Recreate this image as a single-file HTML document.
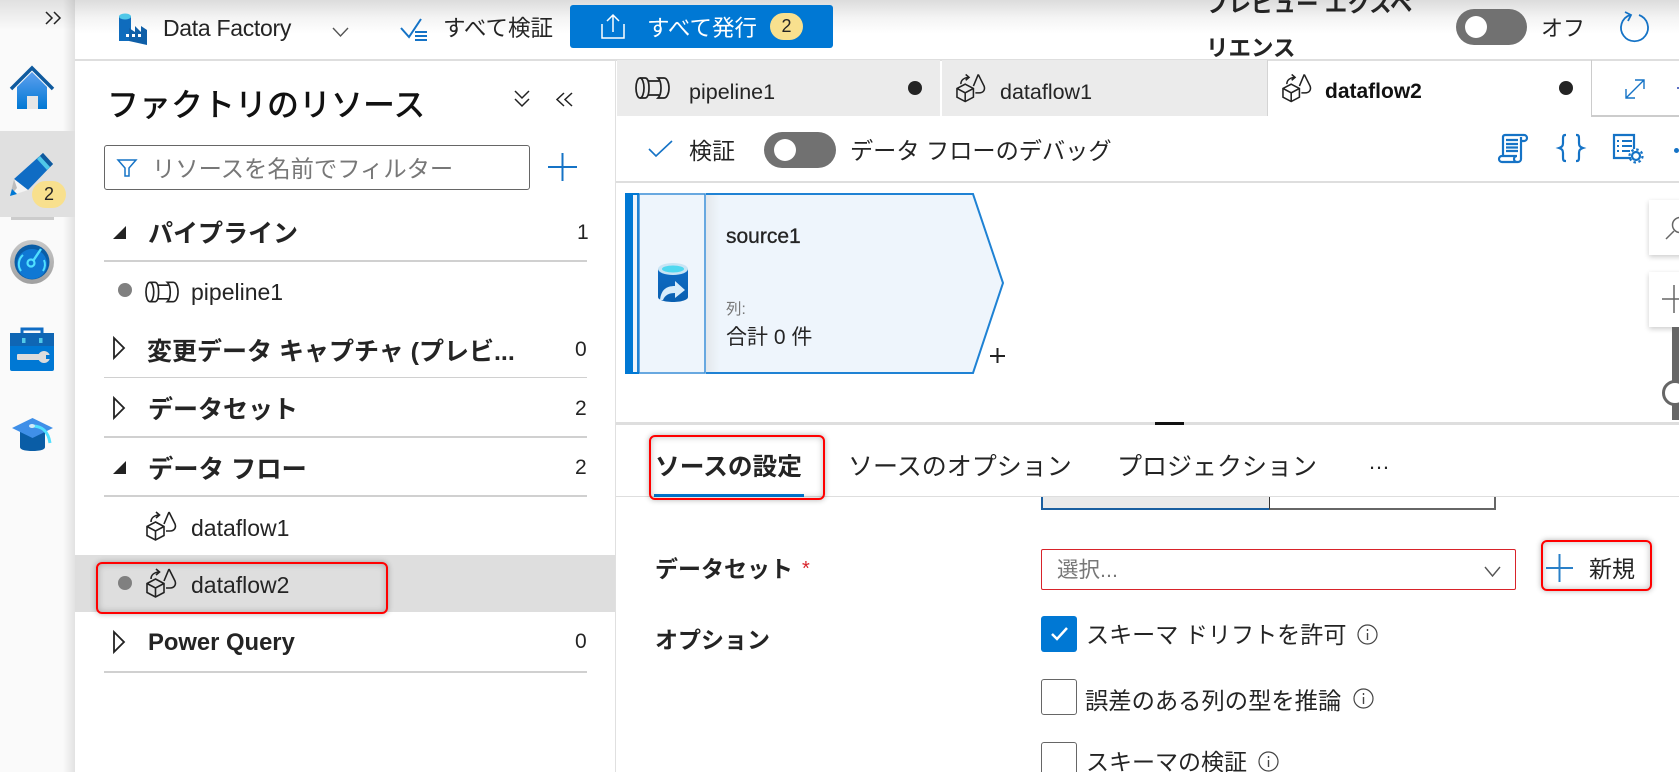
<!DOCTYPE html>
<html lang="ja"><head><meta charset="utf-8"><title>Data Factory</title>
<style>
html,body{margin:0;padding:0;width:1679px;height:772px;overflow:hidden;background:#fff}
body{position:relative;font-family:"Liberation Sans","Noto Sans CJK JP",sans-serif;color:#242424}
.a{position:absolute}
.t{position:absolute;white-space:nowrap;height:40px;line-height:40px}
.b{font-weight:700}
.hr{position:absolute;left:104px;width:483px;background:#d0d0d0}
.red{position:absolute;border:2px solid #f00;border-radius:6px;box-sizing:border-box;box-shadow:0 0 6px rgba(0,0,0,.3),inset 0 0 7px rgba(0,0,0,.25)}
svg{position:absolute;overflow:visible}
.bl{fill:none;stroke:#1573c6;stroke-width:2}
</style></head><body>
<svg width="0" height="0" style="position:absolute">
<symbol id="pipe" viewBox="0 0 35 22"><g fill="none" stroke="#222" stroke-width="1.700"><ellipse cx="5" cy="11" rx="4" ry="10"/><path d="M5 1h5c3 0 4 5 4 10s-1 10-4 10H5"/><path d="M13 4h11M13 18h11"/><path d="M23 1h6c3 0 5 5 5 10s-2 10-5 10h-6c2-2 3-6 3-10s-1-8-3-10z"/></g></symbol>
<symbol id="flow" viewBox="0 0 31 30"><g fill="none" stroke="#222" stroke-width="1.600"><path d="M9.500 11l8.500 4.500v9L9.500 29 1 24.500v-9z"/><path d="M1 15.500l8.500 4.500 8.500-4.500M9.500 20v9"/><path d="M23 1l-5 12M23 1l6 12c1.500 4-1 7-5 7h-4"/><path d="M5 11c0-4 3-6.500 8-7M10 1l3.500 3L10 7"/></g></symbol>
</svg>

<!-- top bar -->
<div class="a" style="left:75px;top:0;width:1604px;height:59px;background:linear-gradient(#dcdcdc 0,#f4f4f4 18px,#fff 34px);border-bottom:2px solid #dedede"></div>
<svg style="left:119px;top:13px" width="28" height="28" viewBox="0 0 28 28"><rect x="0" y="3" width="12" height="25" fill="#0f6cbd"/><ellipse cx="6" cy="3.500" rx="6" ry="3" fill="#50c8e8"/><path d="M10 28V15l6 4v-6l6 6v-6l6 4v15z" fill="#0f5fa8"/><rect x="7" y="21" width="3" height="3" fill="#fff"/><rect x="13" y="21" width="3" height="3" fill="#fff"/><rect x="19" y="21" width="3" height="3" fill="#fff"/></svg>
<div class="t" style="left:163px;top:8px;font-size:23px;letter-spacing:-.3px">Data Factory</div>
<svg style="left:332px;top:27px" width="17" height="10"><path d="M1 1l7.500 8L16 1" fill="none" stroke="#555" stroke-width="1.400"/></svg>
<svg style="left:400px;top:18px" width="28" height="23"><path d="M1 10l8 9L21 1" class="bl" stroke-width="1.600"/><path d="M15 14h12M15 18h12M15 22h12" fill="none" stroke="#1573c6" stroke-width="2"/></svg>
<div class="t" style="left:443px;top:9px;font-size:22.500px">すべて検証</div>
<div class="a" style="left:570px;top:5px;width:263px;height:43px;background:#0078d4;border-radius:3px"></div>
<svg style="left:601px;top:14px" width="24" height="25"><path d="M1 10v14h22V10M12 18V2M6 7l6-6 6 6" fill="none" stroke="#fff" stroke-width="1.500"/></svg>
<div class="t" style="left:647px;top:9px;font-size:22.500px;color:#fff">すべて発行</div>
<div class="a" style="left:770px;top:13px;width:33px;height:27px;border-radius:14px;background:#f8e08e;text-align:center;font-size:18px;line-height:27px">2</div>
<div class="t b" style="left:1206px;top:-15px;font-size:22.500px">プレビュー エクスペ</div>
<div class="t b" style="left:1206px;top:29px;font-size:22.500px">リエンス</div>
<div class="a" style="left:1456px;top:9px;width:71px;height:36px;border-radius:18px;background:#717171"></div>
<div class="a" style="left:1465px;top:16px;width:22px;height:22px;border-radius:50%;background:#fff"></div>
<div class="t" style="left:1541px;top:9px;font-size:22px">オフ</div>
<svg style="left:1620px;top:10px" width="30" height="31"><path d="M10 5a13.500 13.500 0 1 0 9 0" fill="none" stroke="#1573c6" stroke-width="1.800"/><path d="M5 2l6 3-3 6" fill="none" stroke="#1573c6" stroke-width="1.800"/></svg>

<!-- sidebar -->
<div class="a" style="left:0;top:0;width:75px;height:772px;background:linear-gradient(to right,#fafafa 84%,#e2e2e2 100%)"></div>
<div class="a" style="left:0;top:0;width:75px;height:30px;background:linear-gradient(rgba(0,0,0,.1),rgba(0,0,0,0))"></div>
<svg style="left:45px;top:11px" width="16" height="14"><path d="M1 1l6 6-6 6M9 1l6 6-6 6" fill="none" stroke="#222" stroke-width="1.500"/></svg>
<svg style="left:10px;top:66px" width="44" height="43" viewBox="0 0 44 43"><defs><linearGradient id="g1" x1="0" y1="0" x2="0" y2="1"><stop offset="0" stop-color="#5ea0ef"/><stop offset="1" stop-color="#0078d4"/></linearGradient></defs><path d="M7 21L22 6l15 15v22H7z" fill="url(#g1)"/><path d="M1 23L22 2l21 21" fill="none" stroke="#0f5a9e" stroke-width="3.500"/><rect x="17" y="30" width="11" height="13" fill="#e6e6e6"/></svg>
<div class="a" style="left:0;top:131px;width:75px;height:86px;background:#e0e0e0"></div>
<div class="a" style="left:11px;top:217px;width:43px;height:3px;background:#ccc"></div>
<svg style="left:10px;top:152px" width="44" height="45" viewBox="0 0 44 45"><path d="M33 1l10 11-25 26L4 27z" fill="#0f6cc4"/><path d="M30 4l10 11 3-3-10-11z" fill="#0f5a9e"/><path d="M27 7l3-3 10 11-3 3z" fill="#50c8e8"/><path d="M4 27l14 11-18 6z" fill="#f4f4f4"/><path d="M4 27l3 9-7 8z" fill="#bdbdbd"/><path d="M2 37l5 5-7 2z" fill="#0078d4"/></svg>
<div class="a" style="left:32px;top:181px;width:34px;height:27px;border-radius:14px;background:#f8e08e;text-align:center;font-size:18px;line-height:27px">2</div>
<svg style="left:10px;top:240px" width="44" height="44" viewBox="0 0 44 44"><defs><linearGradient id="g2" x1="0" y1="0" x2="0" y2="1"><stop offset="0" stop-color="#c8c8c8"/><stop offset="1" stop-color="#a0a0a0"/></linearGradient></defs><circle cx="22" cy="22" r="22" fill="url(#g2)"/><circle cx="22" cy="22" r="17.500" fill="#0a5da6"/><circle cx="22" cy="24" r="15" fill="#0f78d4"/><circle cx="21" cy="23" r="3.500" fill="none" stroke="#50e0ff" stroke-width="2.200"/><path d="M23 21l8-12" stroke="#50e0ff" stroke-width="2.400"/><path d="M11 31a12 12 0 0 1 2-16M33 31a12 12 0 0 0 1-11" fill="none" stroke="#50e0ff" stroke-width="2"/></svg>
<svg style="left:10px;top:327px" width="44" height="45" viewBox="0 0 44 45"><path d="M12 8V2h20v6" fill="none" stroke="#0f6cc4" stroke-width="3"/><rect y="6" width="44" height="38" rx="2" fill="#0078d4"/><rect y="6" width="44" height="13" fill="#0f66b4"/><rect x="12" y="11" width="3.500" height="5" fill="#50c8e8"/><rect x="29" y="11" width="3.500" height="5" fill="#50c8e8"/><rect x="7" y="27" width="25" height="6" rx="1" fill="#dcdcdc"/><circle cx="34" cy="30" r="6" fill="#dcdcdc"/><rect x="36" y="28" width="6" height="4" fill="#0078d4"/></svg>
<svg style="left:11px;top:418px" width="44" height="34" viewBox="0 0 44 34"><path d="M9 14h25v15c0 3-6 4-12.500 4S9 32 9 29z" fill="#0a5da6"/><path d="M21.500 0L42 10 21.500 20 1 10z" fill="#3f8fe8"/><path d="M21 8c9 0 16 4 18 17" fill="none" stroke="#50e0ff" stroke-width="3"/><ellipse cx="21" cy="8" rx="3" ry="2" fill="#cfeaf8"/></svg>

<!-- resource panel -->
<div class="a" style="left:615px;top:60px;width:1px;height:712px;background:#e0e0e0"></div>
<div class="t b" style="left:107px;top:85px;font-size:32px;font-weight:500;color:#111">ファクトリのリソース</div>
<svg style="left:514px;top:90px" width="16" height="17"><path d="M1 1l7 7 7-7M1 9l7 7 7-7" fill="none" stroke="#222" stroke-width="1.500"/></svg>
<svg style="left:556px;top:92px" width="18" height="15"><path d="M8 1L1 7.500 8 14M16 1L9 7.500 16 14" fill="none" stroke="#222" stroke-width="1.500"/></svg>
<div class="a" style="left:104px;top:145px;width:424px;height:43px;border:1px solid #666;border-radius:3px"></div>
<svg style="left:117px;top:159px" width="20" height="18"><path d="M1 1h18l-7 8v8H8V9z" fill="none" stroke="#1573c6" stroke-width="1.500"/></svg>
<div class="t" style="left:152px;top:149px;font-size:23.300px;color:#777">リソースを名前でフィルター</div>
<svg style="left:548px;top:153px" width="29" height="28"><path d="M0 14h29M14.500 0v28" stroke="#1573c6" stroke-width="2"/></svg>

<svg style="left:113px;top:226px" width="14" height="14"><path d="M13 0v13H0z" fill="#222"/></svg>
<div class="t b" style="left:148px;top:214px;font-size:25px">パイプライン</div>
<div class="t" style="left:577px;top:213px;font-size:21px">1</div>
<div class="hr" style="top:260px;height:2px"></div>
<div class="a" style="left:118px;top:283px;width:14px;height:14px;border-radius:50%;background:#808080"></div>
<svg style="left:145px;top:281px" width="34" height="22"><use href="#pipe" width="34" height="22"/></svg>
<div class="t" style="left:191px;top:272px;font-size:23px">pipeline1</div>

<svg style="left:113px;top:337px" width="12" height="22"><path d="M1 1l10 10L1 21z" fill="none" stroke="#222" stroke-width="1.800"/></svg>
<div class="t b" style="left:147px;top:332px;font-size:25px">変更データ キャプチャ (プレビ...</div>
<div class="t" style="left:575px;top:330px;font-size:21px">0</div>
<div class="hr" style="top:377px;height:1px"></div>
<svg style="left:113px;top:397px" width="12" height="22"><path d="M1 1l10 10L1 21z" fill="none" stroke="#222" stroke-width="1.800"/></svg>
<div class="t b" style="left:148px;top:390px;font-size:25px">データセット</div>
<div class="t" style="left:575px;top:389px;font-size:21px">2</div>
<div class="hr" style="top:436px;height:2px"></div>
<svg style="left:113px;top:461px" width="14" height="14"><path d="M13 0v13H0z" fill="#222"/></svg>
<div class="t b" style="left:148px;top:450px;font-size:25.300px">データ フロー</div>
<div class="t" style="left:575px;top:448px;font-size:21px">2</div>
<div class="hr" style="top:495px;height:2px"></div>
<svg style="left:146px;top:511px" width="31" height="30"><use href="#flow" width="31" height="30"/></svg>
<div class="t" style="left:191px;top:508px;font-size:23px">dataflow1</div>
<div class="a" style="left:75px;top:555px;width:540px;height:57px;background:#dedede"></div>
<div class="red" style="left:96px;top:562px;width:292px;height:52px"></div>
<div class="a" style="left:118px;top:576px;width:14px;height:14px;border-radius:50%;background:#808080"></div>
<svg style="left:146px;top:568px" width="31" height="30"><use href="#flow" width="31" height="30"/></svg>
<div class="t" style="left:191px;top:565px;font-size:23px">dataflow2</div>
<svg style="left:113px;top:631px" width="12" height="22"><path d="M1 1l10 10L1 21z" fill="none" stroke="#222" stroke-width="1.800"/></svg>
<div class="t b" style="left:148px;top:623px;font-size:23.800px">Power Query</div>
<div class="t" style="left:575px;top:622px;font-size:21px">0</div>
<div class="hr" style="top:671px;height:2px"></div>

<!-- tabs -->
<div class="a" style="left:617px;top:60px;width:323px;height:56px;background:#ebebeb"></div>
<div class="a" style="left:942px;top:60px;width:325px;height:56px;background:#ebebeb"></div>
<div class="a" style="left:1267px;top:60px;width:1px;height:56px;background:#d4d4d4"></div>
<div class="a" style="left:1591px;top:60px;width:1px;height:56px;background:#ccc"></div>
<div class="a" style="left:1591px;top:115px;width:88px;height:2px;background:#ccc"></div>
<svg style="left:635px;top:77px" width="35" height="22"><use href="#pipe" width="35" height="22"/></svg>
<div class="t" style="left:689px;top:72px;font-size:21.500px">pipeline1</div>
<div class="a" style="left:908px;top:81px;width:14px;height:14px;border-radius:50%;background:#242424"></div>
<svg style="left:956px;top:73px" width="30" height="30"><use href="#flow" width="30" height="30"/></svg>
<div class="t" style="left:1000px;top:72px;font-size:21.500px">dataflow1</div>
<svg style="left:1282px;top:73px" width="30" height="30"><use href="#flow" width="30" height="30"/></svg>
<div class="t b" style="left:1325px;top:72px;font-size:21px;color:#111">dataflow2</div>
<div class="a" style="left:1559px;top:81px;width:14px;height:14px;border-radius:50%;background:#242424"></div>
<svg style="left:1625px;top:79px" width="20" height="20"><path d="M1 19L19 1M10 1h9v9M1 10v9h9" fill="none" stroke="#1573c6" stroke-width="1.400"/></svg>
<div class="a" style="left:1677px;top:87px;width:2px;height:2px;background:#5b6fc4"></div>

<!-- toolbar -->
<svg style="left:648px;top:140px" width="25" height="17"><path d="M1 9l7 7L24 1" fill="none" stroke="#1573c6" stroke-width="1.600"/></svg>
<div class="t" style="left:689px;top:131px;font-size:23px">検証</div>
<div class="a" style="left:764px;top:132px;width:72px;height:36px;border-radius:18px;background:#717171"></div>
<div class="a" style="left:774px;top:139px;width:22px;height:22px;border-radius:50%;background:#fff"></div>
<div class="t" style="left:850px;top:131px;font-size:23.200px">データ フローのデバッグ</div>
<svg style="left:1498px;top:134px" width="30" height="30"><g fill="none" stroke="#1573c6" stroke-width="2.200"><path d="M5 22V3a2 2 0 0 1 2-2H26a3 3 0 0 1 0 6h-3"/><path d="M23 3v22a3 3 0 0 1-3 3H4a3 3 0 0 1 0-6H19a3 3 0 0 0 0 6"/><path d="M8 6h12M8 10h12M8 13.500h12M8 17h12"/></g></svg>
<svg style="left:1558px;top:134px" width="26" height="28"><path d="M8 1H7C5 1 5 3 5 5v4c0 3-1 4-4 5 3 1 4 2 4 5v4c0 2 0 4 2 4h1M18 1h1c2 0 2 2 2 4v4c0 3 1 4 4 5-3 1-4 2-4 5v4c0 2 0 4-2 4h-1" fill="none" stroke="#1573c6" stroke-width="2.200"/></svg>
<svg style="left:1613px;top:134px" width="30" height="29"><path d="M18 24H1V1h20v14" fill="none" stroke="#1573c6" stroke-width="2.200"/><path d="M4 7h2M9 7h10M4 12h2M9 12h10M4 17h2M9 17h8" stroke="#1573c6" stroke-width="2"/><circle cx="23" cy="22" r="4" fill="none" stroke="#1573c6" stroke-width="2.200"/><circle cx="23" cy="22" r="6.500" fill="none" stroke="#1573c6" stroke-width="2.200" stroke-dasharray="2.500 2.600"/></svg>
<div class="a" style="left:1674px;top:148px;width:5px;height:5px;border-radius:50%;background:#1573c6"></div>
<div class="a" style="left:616px;top:181px;width:1063px;height:2px;background:#dedede"></div>

<!-- canvas node -->
<svg style="left:620px;top:185px" width="400" height="200"><defs><linearGradient id="g4" x1="0" x2="1" y1="0" y2="0"><stop offset="0" stop-color="#e4e8ec"/><stop offset="1" stop-color="#eef5fc"/></linearGradient></defs><path d="M86 9H353L383 98 353 188H86z" fill="#eef5fc" stroke="#1f82d4" stroke-width="2"/><rect x="86" y="10" width="14" height="177" fill="url(#g4)"/><rect x="5" y="8" width="81" height="181" fill="#eef5fc"/><rect x="5" y="8" width="8" height="181" fill="#0078d4"/><rect x="13" y="10" width="4" height="178" fill="#eef5fc"/><rect x="19" y="9" width="66" height="179" fill="#eef5fc" stroke="#3b8fd6" stroke-width="1.500"/><rect x="17" y="8" width="2" height="181" fill="#1f82d4"/><rect x="5" y="8" width="14" height="2" fill="#0078d4"/><rect x="5" y="187" width="14" height="2" fill="#0078d4"/></svg>
<svg style="left:658px;top:263px" width="30" height="39" viewBox="0 0 30 39"><defs><linearGradient id="g3" x1="0" y1="0" x2="0" y2="1"><stop offset="0" stop-color="#0f6cc4"/><stop offset="1" stop-color="#0a5fb0"/></linearGradient></defs><path d="M0 6v28c0 3 7 5 15 5s15-2 15-5V6z" fill="url(#g3)"/><ellipse cx="15" cy="6" rx="15" ry="6" fill="#c8e4f4"/><ellipse cx="15" cy="6" rx="11" ry="3.500" fill="#50d8f0"/><path d="M2 37c1-10 6-14 15-14v-5l10 9-10 8v-5c-6 0-10 2-12 7z" fill="#d8ecfa"/></svg>
<div class="t" style="left:726px;top:217px;font-size:21px;font-weight:500;-webkit-text-stroke:.3px #242424">source1</div>
<div class="t" style="left:726px;top:290px;font-size:15.500px;color:#777">列:</div>
<div class="t" style="left:726px;top:318px;font-size:21px">合計 0 件</div>
<svg style="left:990px;top:348px" width="16" height="16"><path d="M0 8h15M7.500 0v15" stroke="#222" stroke-width="2"/></svg>

<!-- floating controls -->
<div class="a" style="left:1649px;top:200px;width:40px;height:55px;background:#fff;box-shadow:0 2px 5px rgba(0,0,0,.2)"></div>
<svg style="left:1665px;top:217px" width="20" height="23"><circle cx="15" cy="8" r="7.500" fill="none" stroke="#666" stroke-width="1.500"/><path d="M9 14L1 22" stroke="#666" stroke-width="1.500"/></svg>
<div class="a" style="left:1649px;top:272px;width:40px;height:55px;background:#fff;box-shadow:0 2px 5px rgba(0,0,0,.2)"></div>
<svg style="left:1662px;top:285px" width="17" height="28"><path d="M0 14h17M12 0v28" stroke="#666" stroke-width="1.500"/></svg>
<div class="a" style="left:1672px;top:327px;width:7px;height:93px;background:#666"></div>
<div class="a" style="left:1662px;top:380px;width:26px;height:26px;border-radius:50%;background:#fff;border:3px solid #666;box-sizing:border-box"></div>

<!-- bottom panel -->
<div class="a" style="left:616px;top:422px;width:1063px;height:3px;background:#dedede"></div>
<div class="a" style="left:1155px;top:422px;width:29px;height:3px;background:#111"></div>
<div class="t b" style="left:655px;top:448px;font-size:24.700px">ソースの設定</div>
<div class="t" style="left:848px;top:447px;font-size:25px">ソースのオプション</div>
<div class="t" style="left:1117px;top:447px;font-size:25px">プロジェクション</div>
<div class="t" style="left:1368px;top:442px;font-size:22px">…</div>
<div class="a" style="left:616px;top:496px;width:1063px;height:1px;background:#dedede"></div>
<div class="a" style="left:654px;top:494px;width:150px;height:3px;background:#0078d4"></div>
<div class="red" style="left:649px;top:435px;width:176px;height:65px"></div>
<div class="a" style="left:1041px;top:497px;width:226px;height:11px;background:#eaeaea;border-left:2px solid #1a5fa0;border-bottom:2px solid #1a5fa0"></div>
<div class="a" style="left:1269px;top:497px;width:224px;height:11px;border-left:1px solid #333;border-right:2px solid #666;border-bottom:2px solid #666"></div>

<div class="t b" style="left:655px;top:549px;font-size:23px">データセット</div>
<div class="t" style="left:802px;top:549px;font-size:20px;color:#d8232a">*</div>
<div class="a" style="left:1041px;top:549px;width:473px;height:39px;border:1.500px solid #d8232a;border-radius:2px"></div>
<div class="t" style="left:1057px;top:550px;font-size:21.500px;color:#777">選択...</div>
<svg style="left:1484px;top:566px" width="17" height="11"><path d="M1 1l7.500 9L16 1" fill="none" stroke="#555" stroke-width="1.400"/></svg>
<div class="red" style="left:1541px;top:540px;width:111px;height:51px"></div>
<svg style="left:1546px;top:554px" width="27" height="28"><path d="M0 14h27M13.500 0v28" stroke="#2a80c8" stroke-width="2"/></svg>
<div class="t" style="left:1589px;top:549px;font-size:23px">新規</div>

<div class="t b" style="left:655px;top:620px;font-size:23px">オプション</div>
<div class="a" style="left:1041px;top:616px;width:36px;height:36px;background:#0078d4;border-radius:3px"></div>
<svg style="left:1051px;top:627px" width="17" height="14"><path d="M1 7l5 5L16 1" fill="none" stroke="#fff" stroke-width="2.500"/></svg>
<div class="t" style="left:1086px;top:615px;font-size:23.100px">スキーマ ドリフトを許可</div>
<svg style="left:1357px;top:624px" width="21" height="21"><circle cx="10.500" cy="10.500" r="9.500" fill="none" stroke="#444" stroke-width="1.200"/><path d="M10.500 9v7M10.500 5v2" stroke="#444" stroke-width="1.400"/></svg>
<div class="a" style="left:1041px;top:679px;width:34px;height:34px;border:1px solid #666;border-radius:3px"></div>
<div class="t" style="left:1085px;top:681px;font-size:23.300px">誤差のある列の型を推論</div>
<svg style="left:1353px;top:688px" width="21" height="21"><circle cx="10.500" cy="10.500" r="9.500" fill="none" stroke="#444" stroke-width="1.200"/><path d="M10.500 9v7M10.500 5v2" stroke="#444" stroke-width="1.400"/></svg>
<div class="a" style="left:1041px;top:742px;width:34px;height:34px;border:1px solid #666;border-radius:3px"></div>
<div class="t" style="left:1086px;top:742px;font-size:23px">スキーマの検証</div>
<svg style="left:1258px;top:751px" width="21" height="21"><circle cx="10.500" cy="10.500" r="9.500" fill="none" stroke="#444" stroke-width="1.200"/><path d="M10.500 9v7M10.500 5v2" stroke="#444" stroke-width="1.400"/></svg>
</body></html>
